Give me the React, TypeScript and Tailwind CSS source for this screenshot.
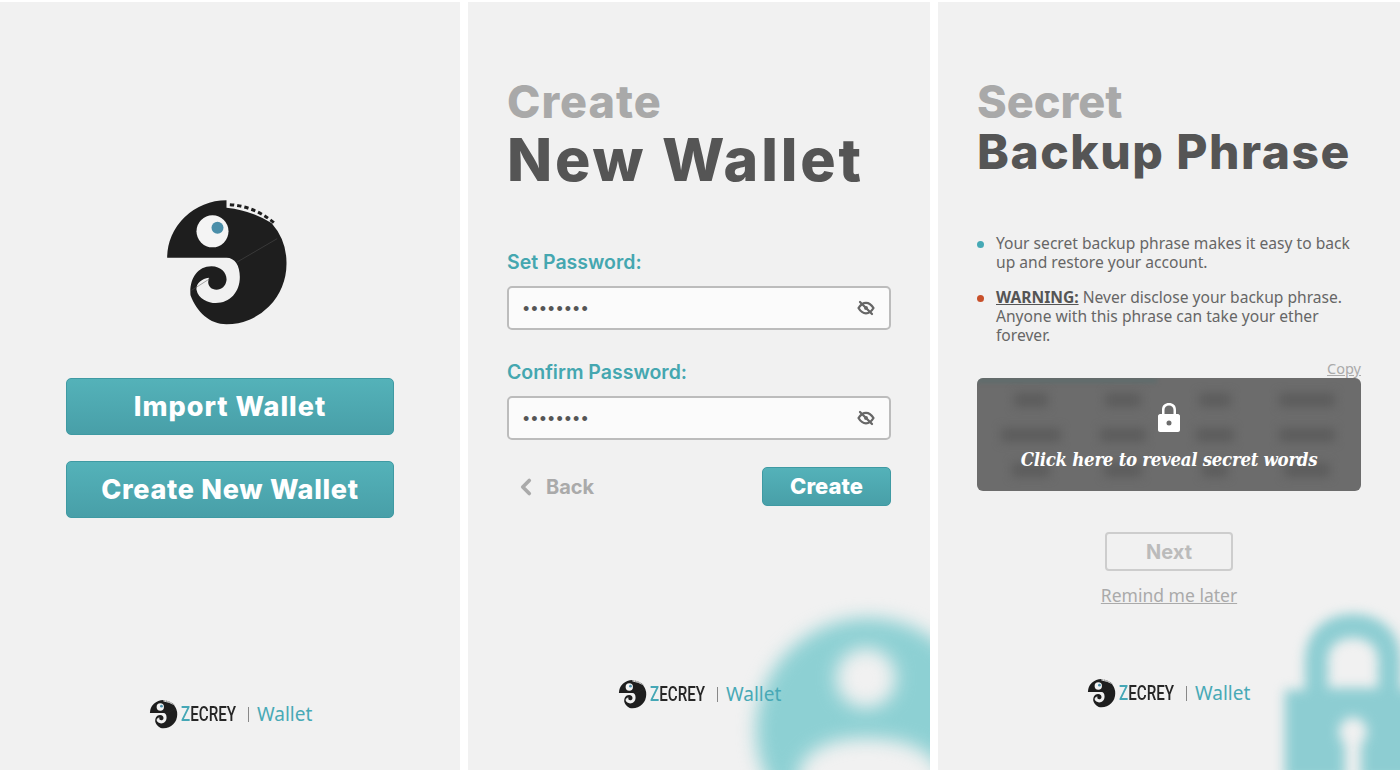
import { ChevronLeft } from "lucide-react";

const HEAD = "font-['Inter','Liberation_Sans',sans-serif]";
const BODY = "font-['Noto_Sans','Open_Sans',sans-serif]";
const BTN =
  "rounded-[5px] border border-[#3f9aa3] bg-gradient-to-b from-[#54b2b9] to-[#489fa8] text-white font-extrabold flex items-center justify-center " +
  HEAD;

function Logo({ className }: { className: string }) {
  return (
    <svg viewBox="100 50 380 390" className={className}>
      <path
        d="M112 232 A178 172 0 0 1 290 60 L290 82 Q365 90 425 128 A182 182 0 0 1 470 250 A180 182 0 0 1 290 432 C240 432 200 395 182 345 C178 300 200 258 245 258 C275 258 292 280 290 300 C288 318 275 328 260 328 C245 328 235 318 235 305 L237 292 C215 295 198 310 200 328 C205 355 235 368 258 368 C300 368 330 335 330 290 C330 255 315 232 290 232 Z"
        fill="#1e1e1e"
      />
      <path d="M300 73 Q375 78 433 128" fill="none" stroke="#1e1e1e" strokeWidth="9" strokeDasharray="13 9" />
      <circle cx="248" cy="153" r="48" fill="#f4f4f4" />
      <circle cx="263" cy="142" r="18" fill="#4a8ea9" />
      <path d="M442 175 L322 245 M240 295 L185 330" stroke="#555" strokeWidth="1.5" />
    </svg>
  );
}

function Footer({ className }: { className: string }) {
  return (
    <div className={`flex items-center ${className}`}>
      <Logo className="h-[30px] w-[29px]" />
      <div className="ml-[3px] w-[56px] font-['Roboto',sans-serif] text-[20px] font-medium leading-none text-[#262626]">
        <div className="origin-left scale-x-[0.76] whitespace-nowrap">
          <span className="text-[#45a7b6]">Z</span>ECREY
        </div>
      </div>
      <div className="ml-[11px] h-[15px] w-px bg-[#888]" />
      <div className={`ml-2 text-[19px] leading-none text-[#48a9b6] ${BODY}`}>Wallet</div>
    </div>
  );
}

function EyeSlash() {
  return (
    <svg viewBox="0 0 24 24" className="h-[18px] w-[18px]" fill="none" stroke="#666" strokeWidth="3" strokeLinecap="round" strokeLinejoin="round">
      <path d="M2 12 C5 7 8 5 12 5 C16 5 19 7 22 12 C19 17 16 19 12 19 C8 19 5 17 2 12 Z" />
      <circle cx="12" cy="12" r="2.6" fill="#666" stroke="none" />
      <path d="M4 4 L20 20" />
    </svg>
  );
}

function PasswordField({ label, className }: { label: string; className: string }) {
  return (
    <div className={className}>
      <div className={`text-[19.5px] font-semibold leading-[24px] text-[#45a7b0] ${HEAD}`}>{label}</div>
      <div className="mt-3 flex h-[44px] w-[384px] items-center justify-between rounded-[5px] border-2 border-[#bcbcbc] bg-[#fbfbfb] pl-[14px] pr-[14px]">
        <span className="pt-[3px] font-['Liberation_Sans',sans-serif] text-[18px] tracking-[2.05px] text-[#555]">••••••••</span>
        <EyeSlash />
      </div>
    </div>
  );
}

const WORDS = [
  ["w-[34px]", "w-[36px]", "w-[32px]", "w-[56px]"],
  ["w-[60px]", "w-[46px]", "w-[38px]", "w-[56px]"],
  ["w-[38px]", "w-[38px]", "w-[26px]", "w-[46px]"],
];

export default function App() {
  return (
    <div className="flex h-[770px] w-[1400px] gap-2 overflow-hidden bg-white pt-[2px]">
      {/* Landing */}
      <section className="flex w-[460px] flex-col bg-[#f1f1f1]">
        <Logo className="ml-[163px] mt-[195px] h-[130px] w-[127px]" />
        <div className={`${BTN} ml-[66px] mt-[51px] h-[57px] w-[328px] pt-[2px] text-[27px] tracking-[1px]`}>Import Wallet</div>
        <div className={`${BTN} ml-[66px] mt-[26px] h-[57px] w-[328px] pt-[2px] text-[27px] tracking-[0.7px]`}>Create New Wallet</div>
        <Footer className="ml-[149px] mt-[181px]" />
      </section>

      {/* Create wallet */}
      <section className="relative flex w-[462px] flex-col overflow-hidden bg-[#f1f1f1] pl-[39px]">
        <svg viewBox="0 0 240 240" className="absolute left-[280px] top-[608px] h-[240px] w-[240px] blur-[9px]">
          <path
            fillRule="evenodd"
            d="M120 8 A112 112 0 1 0 120 232 A112 112 0 1 0 120 8 Z M118 38 A30 30 0 1 1 118 98 A30 30 0 1 1 118 38 Z M118 128 C165 128 195 145 195 175 L195 240 L50 240 L50 170 C50 145 75 128 118 128 Z"
            fill="#8dd0d3"
          />
        </svg>
        <h1 className={`relative mt-[74px] text-[45px] font-extrabold leading-[52px] tracking-[1px] text-[#a9a9a9] ${HEAD}`}>Create</h1>
        <h2 className={`relative text-[59px] font-extrabold leading-[64px] tracking-[2.8px] text-[#555] ${HEAD}`}>New Wallet</h2>
        <PasswordField label="Set Password:" className="relative mt-[58px]" />
        <PasswordField label="Confirm Password:" className="relative mt-[30px]" />
        <div className="relative mt-[27px] flex w-[384px] items-center justify-between">
          <div className={`flex items-center pl-[6px] text-[20px] font-bold text-[#aaa] ${HEAD}`}>
            <ChevronLeft className="h-[26px] w-[26px]" strokeWidth={3.4} />
            <span className="ml-[7px]">Back</span>
          </div>
          <div className={`${BTN} h-[39px] w-[129px] text-[22px]`}>Create</div>
        </div>
        <Footer className="relative ml-[111px] mt-[173px]" />
      </section>

      {/* Backup phrase */}
      <section className="relative flex w-[462px] flex-col overflow-hidden bg-[#f1f1f1] pl-[39px]">
        <svg viewBox="0 0 130 170" className="absolute left-[347px] top-[608px] h-[170px] w-[130px] blur-[6px]">
          <path
            fillRule="evenodd"
            d="M0 80 L20 80 L20 52 C20 20 42 4 68 4 C94 4 116 20 116 52 L116 80 L130 80 L130 170 L0 170 Z M43 78 L93 78 L93 50 C93 36 82 28 68 28 C54 28 43 36 43 50 Z M68 107 A15 15 0 0 0 60 134 L60 170 L76 170 L76 134 A15 15 0 0 0 68 107 Z"
            fill="#8dcdd2"
          />
        </svg>
        <h1 className={`relative mt-[75px] text-[45px] font-extrabold leading-[50px] text-[#a9a9a9] ${HEAD}`}>Secret</h1>
        <h2 className={`relative text-[48px] font-extrabold leading-[50px] tracking-[1.5px] text-[#555] ${HEAD}`}>Backup Phrase</h2>
        <ul className={`relative mt-[57px] w-[384px] text-[15.6px] leading-[19px] text-[#666] ${BODY}`}>
          <li className="flex">
            <span className="mr-[12px] mt-[7px] h-[7px] w-[7px] shrink-0 rounded-full bg-[#46a9b5]" />
            <span>Your secret backup phrase makes it easy to back up and restore your account.</span>
          </li>
          <li className="mt-[16px] flex">
            <span className="mr-[12px] mt-[7px] h-[7px] w-[7px] shrink-0 rounded-full bg-[#c8502a]" />
            <span>
              <span className="font-bold text-[#555] underline">WARNING:</span> Never disclose your backup phrase. Anyone
              with this phrase can take your ether forever.
            </span>
          </li>
        </ul>
        <div className={`relative mt-[14px] w-[384px] text-right text-[14.5px] leading-[18px] text-[#aaa] underline ${BODY}`}>Copy</div>
        <div className="relative mt-[1px] h-[113px] w-[384px] overflow-hidden rounded-[6px] bg-[#6c6c6c]">
          <div className="absolute inset-x-0 top-0 h-[5px] w-[180px] bg-[#5f6c6c] blur-[2px]" />
          <div className="absolute inset-0 grid grid-cols-4 grid-rows-3 place-items-center px-[8px] py-[4px] blur-[5px]">
            {WORDS.flat().map((w, i) => (
              <span key={i} className={`${w} h-[14px] bg-[#5d5d5d]`} />
            ))}
          </div>
          <div className="relative flex h-full flex-col items-center pt-[24px]">
            <svg viewBox="0 0 22 30" className="h-[30px] w-[22px]">
              <path
                fillRule="evenodd"
                d="M4 12 V8 C4 3 7 1 11 1 C15 1 18 3 18 8 V12 H20 C21 12 22 13 22 14 V28 C22 29 21 30 20 30 H2 C1 30 0 29 0 28 V14 C0 13 1 12 2 12 Z M6.5 12 H15.5 V8 C15.5 5 13.5 3.5 11 3.5 C8.5 3.5 6.5 5 6.5 8 Z M11 18.5 A2.5 2.5 0 1 0 11 23.5 A2.5 2.5 0 1 0 11 18.5 Z"
                fill="#fff"
              />
            </svg>
            <div className="mt-[15px] whitespace-nowrap font-['DejaVu_Serif_Condensed','DejaVu_Serif',serif] text-[18.5px] font-bold italic leading-[26px] tracking-[-0.3px] text-white">
              Click here to reveal secret words
            </div>
          </div>
        </div>
        <div className={`relative ml-[128px] mt-[41px] flex h-[39px] w-[128px] items-center justify-center rounded-[4px] border-2 border-[#cdcdcd] text-[20px] font-bold text-[#bbb] ${HEAD}`}>
          Next
        </div>
        <div className={`relative mt-[13px] w-[384px] text-center text-[17.5px] leading-[22px] text-[#aaa] underline ${BODY}`}>Remind me later</div>
        <Footer className="relative ml-[110px] mt-[72px]" />
      </section>
    </div>
  );
}
